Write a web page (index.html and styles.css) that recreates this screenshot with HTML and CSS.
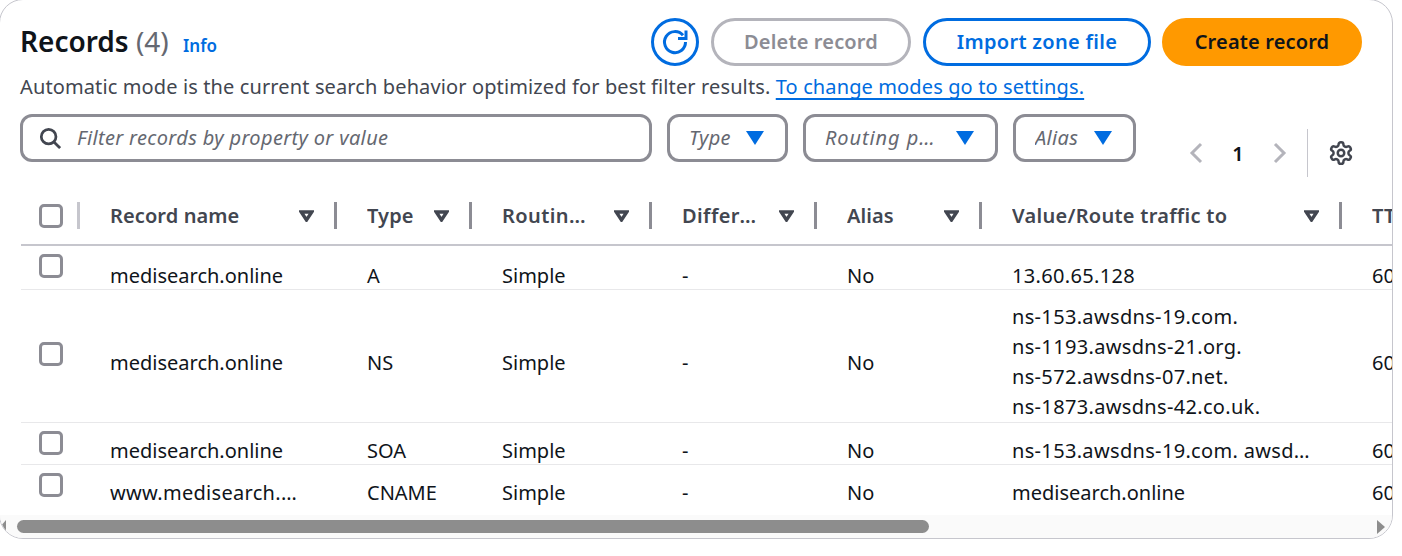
FILE: index.html
```html
<!DOCTYPE html>
<html lang="en">
<head>
  <meta charset="UTF-8" />
  <title>Records</title>
  <link rel="stylesheet" href="styles.css">
</head>
<body>
  <div class="card">
    <div class="head">
      <div class="head-top">
        <h2 class="title">Records <span class="count">(4)</span> <a class="info">Info</a></h2>
        <div class="actions">
          <button class="btn btn-icon">
            <svg width="32" height="32" viewBox="0 0 32 32" fill="none" stroke="currentColor" stroke-width="3">
              <path d="M24 9.300A10.500 10.500 0 1 0 26.500 16"/>
              <path d="M27 4.500V12.500H19" stroke-linejoin="miter"/>
            </svg>
          </button>
          <button class="btn btn-off">Delete record</button>
          <button class="btn btn-line">Import zone file</button>
          <button class="btn btn-main">Create record</button>
        </div>
      </div>
      <p class="note">Automatic mode is the current search behavior optimized for best filter results. <a class="note-link">To change modes go to settings.</a></p>
      <div class="filters">
        <div class="search">
          <svg width="22" height="22" viewBox="0 0 24 24" fill="none" stroke="#424650" stroke-width="3">
            <circle cx="10.5" cy="10.5" r="8"/>
            <path d="M16 16l7 7"/>
          </svg>
          <span>Filter records by property or value</span>
        </div>
        <div class="select sel-type"><span>Type</span><i class="caret"></i></div>
        <div class="select sel-routing"><span>Routing policy</span><i class="caret"></i></div>
        <div class="select sel-alias"><span>Alias</span><i class="caret"></i></div>
        <div class="pager">
          <svg width="14" height="22" viewBox="0 0 14 22" fill="none" stroke="#b4b4bb" stroke-width="3"><path d="M12 2L3 11l9 9"/></svg>
          <b>1</b>
          <svg width="14" height="22" viewBox="0 0 14 22" fill="none" stroke="#b4b4bb" stroke-width="3"><path d="M2 2l9 9-9 9"/></svg>
          <span class="pager-line"></span>
          <svg class="gear" width="26" height="26" viewBox="0 0 24 24" fill="none" stroke="#424650" stroke-width="2.3" stroke-linejoin="round">
            <path d="M12.22 2h-.44a2 2 0 0 0-2 2v.18a2 2 0 0 1-1 1.73l-.43.25a2 2 0 0 1-2 0l-.15-.08a2 2 0 0 0-2.73.73l-.22.38a2 2 0 0 0 .73 2.73l.15.1a2 2 0 0 1 1 1.72v.51a2 2 0 0 1-1 1.74l-.15.09a2 2 0 0 0-.73 2.73l.22.38a2 2 0 0 0 2.73.73l.15-.08a2 2 0 0 1 2 0l.43.25a2 2 0 0 1 1 1.73V20a2 2 0 0 0 2 2h.44a2 2 0 0 0 2-2v-.18a2 2 0 0 1 1-1.73l.43-.25a2 2 0 0 1 2 0l.15.08a2 2 0 0 0 2.73-.73l.22-.39a2 2 0 0 0-.73-2.73l-.15-.08a2 2 0 0 1-1-1.74v-.5a2 2 0 0 1 1-1.74l.15-.09a2 2 0 0 0 .73-2.73l-.22-.38a2 2 0 0 0-2.73-.73l-.15.08a2 2 0 0 1-2 0l-.43-.25a2 2 0 0 1-1-1.73V4a2 2 0 0 0-2-2z"/>
            <circle cx="12" cy="12" r="3"/>
          </svg>
        </div>
      </div>
    </div>

    <div class="table-wrap">
      <table class="records">
        <colgroup>
          <col class="c-check"><col class="c-name"><col class="c-type"><col class="c-routing">
          <col class="c-diff"><col class="c-alias"><col class="c-value"><col class="c-ttl">
        </colgroup>
        <thead>
          <tr>
            <th><div class="th-first"><i class="check"></i><span class="sep sep-light"></span></div></th>
            <th><div class="th-in"><span class="label">Record name</span><svg class="sort" width="15" height="12" viewBox="0 0 15 12"><path d="M2.200 2h10.600L7.500 10z"/></svg><span class="sep"></span></div></th>
            <th><div class="th-in"><span class="label">Type</span><svg class="sort" width="15" height="12" viewBox="0 0 15 12"><path d="M2.200 2h10.600L7.500 10z"/></svg><span class="sep"></span></div></th>
            <th><div class="th-in"><span class="label lab-routing">Routing policy</span><svg class="sort" width="15" height="12" viewBox="0 0 15 12"><path d="M2.200 2h10.600L7.500 10z"/></svg><span class="sep"></span></div></th>
            <th><div class="th-in"><span class="label lab-diff">Differentiator</span><svg class="sort" width="15" height="12" viewBox="0 0 15 12"><path d="M2.200 2h10.600L7.500 10z"/></svg><span class="sep"></span></div></th>
            <th><div class="th-in"><span class="label">Alias</span><svg class="sort" width="15" height="12" viewBox="0 0 15 12"><path d="M2.200 2h10.600L7.500 10z"/></svg><span class="sep"></span></div></th>
            <th><div class="th-in"><span class="label lab-value">Value/Route traffic to</span><svg class="sort" width="15" height="12" viewBox="0 0 15 12"><path d="M2.200 2h10.600L7.500 10z"/></svg><span class="sep"></span></div></th>
            <th><div class="th-in"><span class="label">TTL (seconds)</span></div></th>
          </tr>
        </thead>
        <tbody>
          <tr class="row-first">
            <td class="cell-check"><i class="check"></i></td>
            <td>medisearch.online</td><td>A</td><td>Simple</td><td>-</td><td>No</td><td class="addr">13.60.65.128</td><td>60</td>
          </tr>
          <tr class="row-ns">
            <td class="cell-check"><i class="check"></i></td>
            <td>medisearch.online</td><td>NS</td><td>Simple</td><td>-</td><td>No</td>
            <td class="addr multi">ns-153.awsdns-19.com.<br>ns-1193.awsdns-21.org.<br>ns-572.awsdns-07.net.<br>ns-1873.awsdns-42.co.uk.</td>
            <td>60</td>
          </tr>
          <tr class="row-a">
            <td class="cell-check"><i class="check"></i></td>
            <td>medisearch.online</td><td>SOA</td><td>Simple</td><td>-</td><td>No</td><td class="addr">ns-153.awsdns-19.com. awsdns-hostmaster.amazon.com. 1 7200 900 1209600 86400</td><td>60</td>
          </tr>
          <tr class="row-a row-last">
            <td class="cell-check"><i class="check"></i></td>
            <td class="cell-name">www.medisearch.online</td><td>CNAME</td><td>Simple</td><td>-</td><td>No</td><td>medisearch.online</td><td>60</td>
          </tr>
        </tbody>
      </table>
    </div>

    <div class="hscroll">
      <i class="arrow-left"></i>
      <div class="thumb"></div>
      <i class="arrow-right"></i>
    </div>
  </div>
</body>
</html>
```

FILE: styles.css
```css
html, body {
  margin: 0;
  padding: 0;
  height: 100%;
  overflow: hidden;
  background-color: white;
}

body {
  font-family: "Noto Sans", "Open Sans", sans-serif;
  font-size: 20px;
  color: #0f141a;
}

.card {
  box-sizing: border-box;
  width: 1394px;
  height: 540px;
  margin: -1px 0 0 -1px;
  border: 1px solid #c6c6cd;
  border-radius: 24px;
  overflow: hidden;
  display: flex;
  flex-direction: column;
}

.head {
  padding: 18px 30px 0 20px;
}

.head-top {
  display: flex;
  justify-content: space-between;
  height: 48px;
}

.title {
  margin: 0;
  font-size: 28px;
  font-weight: 600;
  line-height: 46px;
}

.count {
  font-weight: 400;
  color: #656871;
}

.info {
  margin-left: 7px;
  font-size: 17px;
  font-weight: 600;
  color: #006ce0;
}

.actions {
  display: flex;
}

.btn {
  box-sizing: border-box;
  height: 48px;
  margin-left: 12px;
  border: 3px solid;
  border-radius: 24px;
  background: white;
  font-family: inherit;
  font-size: 20px;
  font-weight: 600;
  padding: 0 0 2px;
  letter-spacing: 0.15px;
}

.btn-icon {
  width: 48px;
  padding: 0;
  border-color: #006ce0;
  color: #006ce0;
  display: flex;
  align-items: center;
  justify-content: center;
}

.btn-off {
  width: 200px;
  border-color: #b4b4bb;
  color: #8c8c94;
}

.btn-line {
  width: 228px;
  border-color: #006ce0;
  color: #006ce0;
  letter-spacing: 0.3px;
}

.btn-main {
  width: 200px;
  margin-left: 11px;
  border-color: #ff9900;
  background: #ff9900;
  color: #0f141a;
}

.note {
  margin: 7px 0 0;
  line-height: 28px;
  color: #424650;
  letter-spacing: 0.12px;
}

.note-link {
  color: #006ce0;
  text-decoration: underline 2px;
  text-decoration-skip-ink: none;
  text-underline-offset: 4px;
}

.filters {
  display: flex;
  margin-top: 13px;
  height: 48px;
}

.search, .select {
  box-sizing: border-box;
  height: 48px;
  border: 3px solid #8c8c94;
  border-radius: 12px;
  display: flex;
  align-items: center;
  font-style: italic;
  color: #656871;
  letter-spacing: 0.35px;
}

.search span, .select span {
  padding-bottom: 2px;
}

.search {
  width: 632px;
  padding-left: 16px;
  gap: 16px;
}

.select {
  margin-left: 15px;
  padding: 0 21px 0 19px;
  justify-content: space-between;
}

.select span {
  overflow: hidden;
  white-space: nowrap;
  text-overflow: ellipsis;
}

.sel-type { width: 121px; }
.sel-routing { width: 195px; letter-spacing: 0.9px; }
.sel-alias { width: 123px; }

.caret {
  flex: none;
  margin-left: 14px;
  border-left: 9px solid transparent;
  border-right: 9px solid transparent;
  border-top: 14px solid #006ce0;
}

.sel-routing .caret {
  margin-left: 21px;
}

.pager {
  display: flex;
  align-items: center;
  height: 48px;
  margin: 15px 0 0 53px;
}

.pager b {
  width: 70px;
  text-align: center;
  font-weight: 600;
}

.pager-line {
  width: 1px;
  height: 48px;
  margin: 0 20px 0 20px;
  background: #c6c6cd;
}

.table-wrap {
  flex: 1;
  overflow: hidden;
  margin-top: 28px;
  padding-left: 21px;
}

.records {
  table-layout: fixed;
  width: 1521px;
  border-collapse: collapse;
}

.c-check { width: 59px; }
.c-name { width: 257px; }
.c-type { width: 135px; }
.c-routing { width: 180px; }
.c-diff { width: 165px; }
.c-alias { width: 165px; }
.c-value { width: 360px; }
.c-ttl { width: 200px; }

th {
  box-sizing: border-box;
  height: 55px;
  padding: 0 0 3px;
  border-bottom: 2px solid #c6c6cd;
  text-align: left;
  font-size: 20px;
  font-weight: 600;
  color: #424650;
  letter-spacing: 0.1px;
}

.th-first, .th-in {
  display: flex;
  align-items: center;
}

.th-first {
  padding-left: 18px;
  justify-content: space-between;
}

.th-in {
  padding-left: 30px;
}

.label {
  flex: 1;
  min-width: 0;
  margin-right: 12px;
  overflow: hidden;
  white-space: nowrap;
  text-overflow: ellipsis;
}

.lab-routing { margin-right: 24px; letter-spacing: 0.4px; }
.lab-diff { margin-right: 20px; letter-spacing: 0.4px; }
.lab-value { letter-spacing: 0.27px; }

.sort {
  flex: none;
  fill: none;
  stroke: #424650;
  stroke-width: 3.4;
}

.sep {
  flex: none;
  width: 3px;
  height: 27px;
  margin-left: 20px;
  background: #8c8c94;
}

.sep-light {
  background: #c6c6cd;
  margin-left: 0;
}

.check {
  display: block;
  box-sizing: border-box;
  width: 24px;
  height: 24px;
  border: 3px solid #8c8c94;
  border-radius: 5px;
}

td {
  box-sizing: border-box;
  padding: 15px 30px 0 30px;
  line-height: 26px;
  overflow: hidden;
  white-space: nowrap;
  text-overflow: ellipsis;
  border-bottom: 1px solid #e8e8ea;
  vertical-align: top;
}

td.cell-check {
  padding: 8px 0 0 18px;
}

td.cell-name {
  letter-spacing: 0.3px;
}

.addr {
  letter-spacing: 0.33px;
}

.row-first td { height: 44px; padding-top: 17px; }
.row-first td.cell-check { padding-top: 8px; }
.row-ns td { height: 132px; padding-top: 60px; }
.row-ns td.cell-check { padding-top: 52px; }
.row-ns td.multi { padding-top: 12px; line-height: 30px; }
.row-a td { height: 42px; }
.row-a td.cell-check { padding-top: 8px; }
.row-last td { height: 50px; border-bottom: 0; }

.hscroll {
  flex: none;
  height: 23px;
  background: #fafafa;
  display: flex;
  align-items: center;
}

.thumb {
  width: 912px;
  height: 13px;
  margin-left: 11px;
  border-radius: 7px;
  background: #8d8d8d;
}

.arrow-left, .arrow-right {
  flex: none;
  border-top: 7px solid transparent;
  border-bottom: 7px solid transparent;
}

.arrow-left {
  border-right: 6px solid #8d8d8d;
}

.arrow-right {
  margin-left: auto;
  margin-right: 7px;
  border-left: 8px solid #8d8d8d;
}
```
